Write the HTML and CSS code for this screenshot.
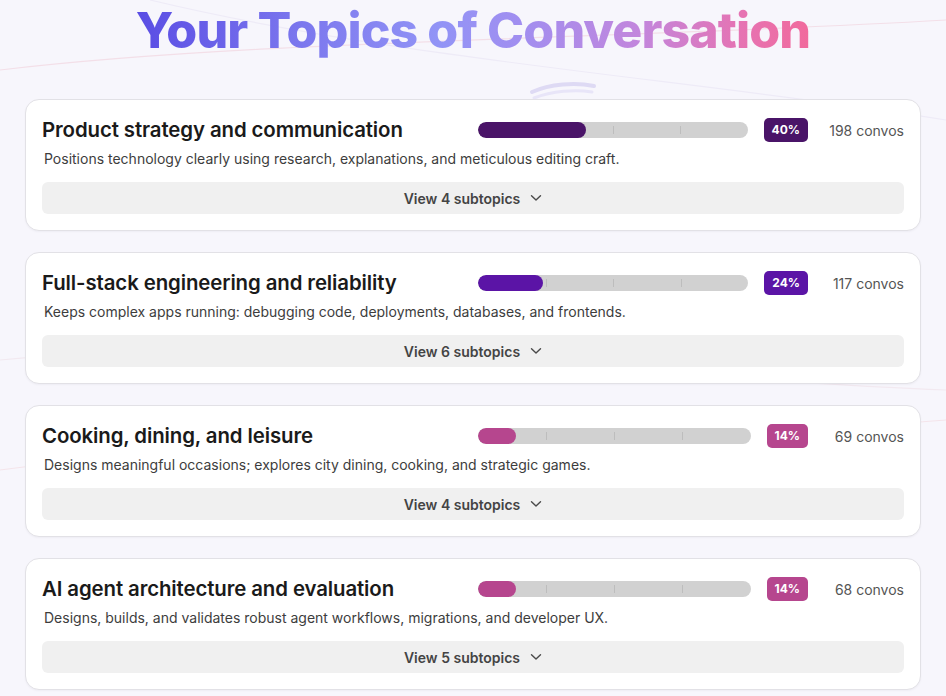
FILE: index.html
```html
<!DOCTYPE html>
<html lang="en">
<head>
<meta charset="utf-8">
<title>Your Topics of Conversation</title>
<link rel="stylesheet" href="styles.css">
</head>
<body>
<div class="decor" aria-hidden="true">
  <svg width="946" height="696" viewBox="0 0 946 696">
    <path d="M0 70 C 250 40, 600 40, 946 20" fill="none" stroke="#f3dfe8" stroke-width="1.2"/>
    <path d="M150 0 C 400 60, 700 80, 946 120" fill="none" stroke="#eeebf7" stroke-width="1.2"/>
    <path d="M0 360 C 300 330, 650 380, 946 390" fill="none" stroke="#f2e9f0" stroke-width="1.2"/>
    <path d="M0 470 C 300 430, 700 440, 946 420" fill="none" stroke="#f4e4ea" stroke-width="1"/>
    <path d="M532 92 C 550 84, 575 82, 594 86" fill="none" stroke="#dedaf4" stroke-width="4" stroke-linecap="round"/>
    <path d="M534 98 C 552 91, 575 89, 592 92" fill="none" stroke="#e8e5f8" stroke-width="3" stroke-linecap="round"/>
  </svg>
</div>
<main class="page">
  <h1 class="title">Your Topics of Conversation</h1>
  <section class="list">
    <article class="card">
      <div class="head">
        <h2 class="name">Product strategy and communication</h2>
        <div class="stats">
          <div class="bar"><div class="fill c-dark" style="width:40%"></div><span class="tick t1"></span><span class="tick t2"></span><span class="tick t3"></span></div>
          <span class="badge c-dark">40%</span>
          <span class="count">198 convos</span>
        </div>
      </div>
      <p class="desc">Positions technology clearly using research, explanations, and meticulous editing craft.</p>
      <button class="more">View 4 subtopics <svg class="chev" width="12" height="8" viewBox="0 0 12 8"><path d="M1.5 1.8 L6 6 L10.5 1.8" fill="none" stroke="#4a4a4a" stroke-width="1.4" stroke-linecap="round" stroke-linejoin="round"/></svg></button>
    </article>
    <article class="card">
      <div class="head">
        <h2 class="name">Full-stack engineering and reliability</h2>
        <div class="stats">
          <div class="bar"><div class="fill c-purple" style="width:24%"></div><span class="tick t1"></span><span class="tick t2"></span><span class="tick t3"></span></div>
          <span class="badge c-purple">24%</span>
          <span class="count">117 convos</span>
        </div>
      </div>
      <p class="desc">Keeps complex apps running: debugging code, deployments, databases, and frontends.</p>
      <button class="more">View 6 subtopics <svg class="chev" width="12" height="8" viewBox="0 0 12 8"><path d="M1.5 1.8 L6 6 L10.5 1.8" fill="none" stroke="#4a4a4a" stroke-width="1.4" stroke-linecap="round" stroke-linejoin="round"/></svg></button>
    </article>
    <article class="card">
      <div class="head">
        <h2 class="name">Cooking, dining, and leisure</h2>
        <div class="stats">
          <div class="bar"><div class="fill c-pink" style="width:14%"></div><span class="tick t1"></span><span class="tick t2"></span><span class="tick t3"></span></div>
          <span class="badge c-pink">14%</span>
          <span class="count">69 convos</span>
        </div>
      </div>
      <p class="desc">Designs meaningful occasions; explores city dining, cooking, and strategic games.</p>
      <button class="more">View 4 subtopics <svg class="chev" width="12" height="8" viewBox="0 0 12 8"><path d="M1.5 1.8 L6 6 L10.5 1.8" fill="none" stroke="#4a4a4a" stroke-width="1.4" stroke-linecap="round" stroke-linejoin="round"/></svg></button>
    </article>
    <article class="card">
      <div class="head">
        <h2 class="name">AI agent architecture and evaluation</h2>
        <div class="stats">
          <div class="bar"><div class="fill c-pink" style="width:14%"></div><span class="tick t1"></span><span class="tick t2"></span><span class="tick t3"></span></div>
          <span class="badge c-pink">14%</span>
          <span class="count">68 convos</span>
        </div>
      </div>
      <p class="desc">Designs, builds, and validates robust agent workflows, migrations, and developer UX.</p>
      <button class="more">View 5 subtopics <svg class="chev" width="12" height="8" viewBox="0 0 12 8"><path d="M1.5 1.8 L6 6 L10.5 1.8" fill="none" stroke="#4a4a4a" stroke-width="1.4" stroke-linecap="round" stroke-linejoin="round"/></svg></button>
    </article>
  </section>
</main>
</body>
</html>
```
FILE: styles.css
```css
* { box-sizing: border-box; }
html, body { margin: 0; padding: 0; }
body {
  background: #f7f6fc;
  font-family: "Inter", "Liberation Sans", sans-serif;
  color: #1c1c1c;
  min-height: 696px;
}
.decor {
  position: absolute;
  left: 0;
  top: 0;
  width: 946px;
  height: 696px;
  overflow: hidden;
  z-index: 0;
  pointer-events: none;
}
.page {
  position: relative;
  z-index: 1;
  width: 896px;
  margin: 0 auto;
  padding-top: 2px;
}
.title {
  margin: 0 auto 41px;
  text-align: center;
  font-family: "Inter", "Roboto", "Liberation Sans", sans-serif;
  font-weight: 800;
  font-size: 50px;
  line-height: 56px;
  letter-spacing: -0.9px;
  background: linear-gradient(90deg, #5a4de4 0%, #7c78ee 25%, #9294f6 45%, #a18ef0 57%, #c386dc 75%, #e673b2 90%, #f16a9c 100%);
  -webkit-background-clip: text;
  background-clip: text;
  color: transparent;
  width: max-content;
}
.list {
  display: flex;
  flex-direction: column;
  gap: 21px;
}
.card {
  background: #fff;
  border: 1px solid #e2e1e6;
  border-radius: 14px;
  padding: 16px 16px 16px 16px;
  min-height: 132px;
  box-shadow: 0 1px 2px rgba(30, 20, 60, 0.04);
}
.head {
  display: grid;
  grid-template-columns: 1fr 1fr;
  column-gap: 10px;
  align-items: center;
  height: 28px;
}
.name {
  margin: 0;
  font-size: 20.4px;
  line-height: 28px;
  font-weight: 600;
  color: #1a1a1a;
  letter-spacing: -0.1px;
  white-space: nowrap;
}
.stats {
  display: flex;
  align-items: center;
  gap: 16px;
}
.bar {
  position: relative;
  flex: 1;
  height: 16px;
  border-radius: 8px;
  background: #d1d1d1;
  overflow: hidden;
}
.fill {
  position: relative;
  z-index: 2;
  height: 100%;
  border-radius: 8px;
}
.tick {
  position: absolute;
  top: 4px;
  width: 1px;
  height: 8px;
  background: #bdbdbd;
  z-index: 1;
}
.t1 { left: 25%; }
.t2 { left: 50%; }
.t3 { left: 75%; }
.c-dark { background: #4a1468; }
.c-purple { background: #5b14a6; }
.c-pink { background: #b6468e; }
.badge {
  height: 24px;
  padding: 0 8px;
  border-radius: 5px;
  color: #fff;
  font-size: 12px;
  font-weight: 700;
  line-height: 24px;
}
.count {
  width: 80px;
  text-align: right;
  font-size: 14px;
  color: #555;
  white-space: nowrap;
}
.desc {
  margin: 5px 0 0 2px;
  font-size: 14px;
  line-height: 20px;
  color: #3d3d3d;
}
.more {
  display: flex;
  align-items: center;
  justify-content: center;
  gap: 8px;
  width: 100%;
  height: 32px;
  margin-top: 13px;
  border: 0;
  border-radius: 6px;
  background: #f0f0f0;
  font-family: "Inter", "Liberation Sans", sans-serif;
  font-size: 14px;
  font-weight: 600;
  color: #444;
  cursor: pointer;
}
.chev { display: block; margin-left: 2px; }
```
